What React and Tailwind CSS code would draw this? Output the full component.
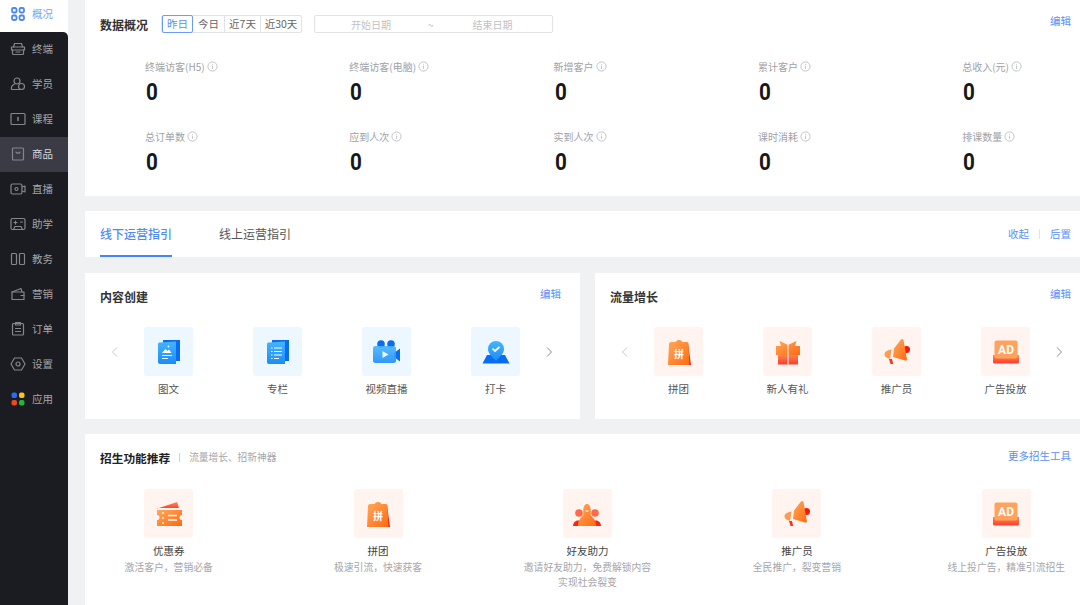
import React from 'react';

const font = "font-['Noto_Sans_CJK_SC','Noto_Sans',sans-serif]";

function NavSvg({ children }) {
  return (
    <svg width="16" height="16" viewBox="0 0 16 16" fill="none" stroke="#85868b" strokeWidth="1.2" strokeLinejoin="round" strokeLinecap="round">
      {children}
    </svg>
  );
}

const navItems = [
  { name: '终端', icon: <><path d="M3.5 6 4.5 2.5h7l1 3.5" /><path d="M1.5 6h13v3h-13z" /><path d="M2.5 9v3.5a1 1 0 0 0 1 1h9a1 1 0 0 0 1-1V9" /><path d="M6 11h4" /></> },
  { name: '学员', icon: <><circle cx="7" cy="5" r="3" /><path d="M4.5 8C2.500 9 1 11 1.500 13.500h9" /><circle cx="11.500" cy="10.500" r="3" /></> },
  { name: '课程', icon: <><rect x="1" y="2.5" width="14" height="11" rx="1" /><path d="M8 6.500v3" strokeWidth="1.500" /></> },
  { name: '商品', icon: <><rect x="2.5" y="2" width="11" height="12" rx="1" /><path d="M6 6c.4 1.600 3.600 1.600 4 0" /></> },
  { name: '直播', icon: <><rect x="1" y="3" width="11" height="10" rx="1.5" /><circle cx="6.500" cy="8" r="1.500" /><path d="M12 6l3-1v6l-3-1" /></> },
  { name: '助学', icon: <><rect x="1" y="2.5" width="14" height="11" rx="1.5" /><path d="M4 6.500h3M5.500 5v3M10.500 6h2M3.500 13.500 5 10.500h6l1.500 3" /></> },
  { name: '教务', icon: <><rect x="1.5" y="2.5" width="5" height="11" rx="1" /><rect x="9.5" y="2.5" width="5" height="11" rx="1" /></> },
  { name: '营销', icon: <><path d="M2 6h12v7.500H2z" /><path d="M2 6l9-3.500 1 3.500" /><path d="M11 9.500h3" /></> },
  { name: '订单', icon: <><rect x="2.5" y="2.5" width="11" height="11.5" rx="1" /><rect x="5.5" y="1.5" width="5" height="2.5" /><path d="M5.500 7.500h5M5.500 10.500h5" /></> },
  { name: '设置', icon: <><path d="M4.500 2h7L15 8l-3.500 6h-7L1 8z" /><circle cx="8" cy="8" r="2" /></> },
];

function NavRow({ name, icon, active }) {
  return (
    <div className={`flex h-[35px] items-center pl-[10px] pb-[2px] gap-[6px] ${active ? 'bg-[#3a3b45]' : ''}`}>
      <span className="flex w-[16px] h-[16px] items-center justify-center">{icon}</span>
      <span className={`text-[10.5px] ${active ? 'text-[#d8d8dc]' : 'text-[#a4a5a9]'}`}>{name}</span>
    </div>
  );
}

function Sidebar() {
  return (
    <aside className="w-[68px] h-full shrink-0 bg-white flex flex-col">
      <div className="flex h-[32px] shrink-0 items-center pl-[10px] pb-[4px] gap-[6px]">
        <svg width="16" height="16" viewBox="0 0 16 16" fill="none" stroke="#4a88f7" strokeWidth="1.8">
          <rect x="2" y="2" width="4.5" height="4.5" rx="1.5" />
          <rect x="9.5" y="2" width="4.5" height="4.5" rx="1.5" />
          <rect x="2" y="9.5" width="4.5" height="4.5" rx="1.5" />
          <rect x="9.5" y="9.5" width="4.5" height="4.5" rx="1.5" />
        </svg>
        <span className="text-[10.5px] text-[#7d9ff5]">概况</span>
      </div>
      <nav className="flex-1 bg-[#1b1c22] rounded-tr-[5px]">
        {navItems.map((item) => (
          <NavRow key={item.name} name={item.name} active={item.name === '商品'} icon={<NavSvg>{item.icon}</NavSvg>} />
        ))}
        <NavRow
          name="应用"
          icon={
            <svg width="14" height="14" viewBox="0 0 14 14">
              <rect x="0.5" y="0.5" width="5.5" height="5.5" rx="2" fill="#2f6bf2" />
              <rect x="8" y="0.5" width="5.5" height="5.5" rx="2" fill="#f7c512" />
              <rect x="0.5" y="8" width="5.5" height="5.5" rx="2" fill="#f0471c" />
              <rect x="8" y="8" width="5.5" height="5.5" rx="2" fill="#22b834" />
            </svg>
          }
        />
      </nav>
    </aside>
  );
}

function Gradients() {
  return (
    <svg width="0" height="0" className="absolute">
      <defs>
        <linearGradient id="blueDoc" x1="0" y1="0" x2="0" y2="1">
          <stop offset="0" stopColor="#45b4ff" />
          <stop offset="1" stopColor="#1c8df5" />
        </linearGradient>
        <linearGradient id="orange" x1="0" y1="0" x2="1" y2="1">
          <stop offset="0" stopColor="#ffa85a" />
          <stop offset="1" stopColor="#ff6a12" />
        </linearGradient>
        <linearGradient id="orangeRed" x1="0" y1="0" x2="0" y2="1">
          <stop offset="0" stopColor="#ff8a55" />
          <stop offset="1" stopColor="#fb3c2a" />
        </linearGradient>
      </defs>
    </svg>
  );
}

function IconSvg({ children }) {
  return <svg width="28" height="28" viewBox="0 0 28 28" fill="none">{children}</svg>;
}

const DocPic = () => (
  <IconSvg>
    <path d="M8 2h17v21H8z" fill="#0a6cf0" />
    <path d="M3 6c0-1 .8-1.500 1.500-1.500L21 3.500v22.500H5c-1.200 0-2-.8-2-2z" fill="url(#blueDoc)" />
    <path d="M7 15l3.500-4 2 2 1.500-1.500 2.500 3.500z" fill="#fff" />
    <circle cx="13.500" cy="8.500" r="0.900" fill="#fff" />
    <path d="M7 17.500h10M7 20.500h6" stroke="#fff" strokeWidth="1.1" />
  </IconSvg>
);

const DocList = () => (
  <IconSvg>
    <path d="M8 2h17v21H8z" fill="#0a6cf0" />
    <path d="M3 6c0-1 .8-1.500 1.500-1.500L21 3.500v22.500H5c-1.200 0-2-.8-2-2z" fill="url(#blueDoc)" />
    <path d="M7 10h1.500M10 10h8M7 13.500h1.500M10 13.500h8M7 17h1.500M10 17h8M7 20.500h1.500M10 20.500h5" stroke="#fff" strokeWidth="1.2" />
  </IconSvg>
);

const Camera = () => (
  <IconSvg>
    <circle cx="8" cy="6" r="3.800" fill="#0a6cf0" />
    <circle cx="18" cy="6" r="3.800" fill="#0a6cf0" />
    <path d="M21 15l6-4.500v13L21 19z" fill="#0a6cf0" />
    <rect x="0" y="8" width="23" height="17" rx="2.5" fill="url(#blueDoc)" opacity="0.9" />
    <path d="M9.500 13l6 3.500-6 3.500z" fill="#fff" opacity="0.9" />
  </IconSvg>
);

const Pin = () => (
  <IconSvg>
    <path d="M5 17h18l4.500 8.500H.5z" fill="#0a6cf0" />
    <path d="M14 23c-2-3-8-6.500-8-12a8 8 0 0 1 16 0c0 5.500-6 9-8 12z" fill="url(#blueDoc)" />
    <path d="M10.500 10.500l2.500 2.500 4.500-4" stroke="#fff" strokeWidth="1.7" />
  </IconSvg>
);

const Bag = () => (
  <IconSvg>
    <path d="M10 5c1-2 2-3 4-3s3 1 4 3z" fill="#ff9a2c" />
    <path d="M23 5l3 22H20z" fill="#f51f0a" />
    <path d="M4 6c0-1 .7-2 2-2h16c1 0 1.500 1 1.500 2l1 21H3z" fill="url(#orange)" />
    <text x="14" y="19.500" textAnchor="middle" fontSize="10" fontWeight="700" fill="#fff" className={font}>拼</text>
  </IconSvg>
);

const Gift = () => (
  <IconSvg>
    <path d="M4 16h20v10.500H4z" fill="url(#orangeRed)" />
    <path d="M2 8h5L5.500 3 14 7l8.500-4L21 8h5v9H2z" fill="url(#orange)" />
    <path d="M13.300 7h1.400v19.500h-1.400z" fill="#ffd9c2" />
  </IconSvg>
);

const Horn = () => (
  <IconSvg>
    <path d="M6 21h3l1.200 5H7.500z" fill="#f8341e" />
    <circle cx="23.500" cy="11.500" r="3.500" fill="#f5180b" />
    <path d="M11 10.500 18 1.500Q19.500.5 20.500 2L24 21.500Q23.500 23 22 22.500L10 19z" fill="url(#orange)" />
    <path d="M8.500 11.500C4 12 1.500 14 1.500 16.500 1.500 19 4 20 7 21z" fill="#ff9a4e" />
  </IconSvg>
);

const Ad = () => (
  <IconSvg>
    <path d="M1 17h26v7a1.500 1.500 0 0 1-1.500 1.500h-23A1.500 1.500 0 0 1 1 24z" fill="url(#orangeRed)" />
    <rect x="2.5" y="2.500" width="23" height="18" rx="2" fill="#ffa35c" />
    <text x="14" y="16" textAnchor="middle" fontSize="12" fontWeight="700" fill="#fff" className="font-['Roboto',sans-serif]">AD</text>
  </IconSvg>
);

const Ticket = () => (
  <IconSvg>
    <path d="M1 9 22 2l2 6H3z" fill="url(#orangeRed)" />
    <path d="M2 10h25v5a2.500 2.500 0 0 0 0 5v6H2v-6a2.500 2.500 0 0 0 0-5z" fill="url(#orange)" />
    <path d="M8 12v2M8 17v2M8 22v2" stroke="#fff" strokeWidth="1.3" />
    <path d="M13 15.500h9M13 20h9" stroke="#fff" strokeWidth="1.3" />
  </IconSvg>
);

const Friends = () => (
  <IconSvg>
    <circle cx="6" cy="13" r="3.800" fill="#ff6a4a" />
    <circle cx="22" cy="13" r="3.800" fill="#ff6a4a" />
    <path d="M0 26c0-3 2-5 4-5.500h20c2 .5 4 2.500 4 5.500z" fill="#f9260f" />
    <path d="M5 26c0-7 4-9 5.500-11C9.500 9 11 4 14 4s4.500 5 3.500 11C19 17 23 19 23 26z" fill="url(#orange)" />
    <path d="M12.500 11h3" stroke="#fff" strokeWidth="1.2" />
  </IconSvg>
);

function IconBox({ tone, children }) {
  return (
    <div className={`w-[49px] h-[49px] rounded-[3px] flex items-center justify-center ${tone === 'blue' ? 'bg-[#ecf7ff]' : 'bg-[#fff4ef]'}`}>
      {children}
    </div>
  );
}

function InfoIcon() {
  return (
    <svg width="11" height="11" viewBox="0 0 11 11" fill="none" stroke="#b4b6bb" strokeWidth="0.8">
      <circle cx="5.500" cy="5.500" r="4.600" />
      <path d="M5.500 4.700v3.200M5.500 2.900v.8" />
    </svg>
  );
}

function Chevron({ dir, light }) {
  return (
    <svg width="8" height="10" viewBox="0 0 8 10" fill="none" stroke={light ? '#c6c7ca' : '#85878c'} strokeWidth="1">
      <path d={dir === 'left' ? 'M6 .5 1.500 5 6 9.500' : 'M2 .5 6.500 5 2 9.500'} />
    </svg>
  );
}

const ranges = [
  { label: '昨日', w: 'w-[31px]', active: true },
  { label: '今日', w: 'w-[32px]' },
  { label: '近7天', w: 'w-[36px]' },
  { label: '近30天', w: 'w-[40px]' },
];

const stats = ['终端访客(H5)', '终端访客(电脑)', '新增客户', '累计客户', '总收入(元)', '总订单数', '应到人次', '实到人次', '课时消耗', '排课数量'];

function Overview() {
  return (
    <section className="bg-white h-[196px] pt-[15px] pl-[15px] pr-[19px]">
      <div className="flex items-center h-[18px]">
        <h2 className="w-[61px] text-[12px] font-bold text-[#333] pt-[2px]">数据概况</h2>
        <div className="flex h-[18px] rounded-[2px] border border-[#e2e3e6]">
          {ranges.map((r) => (
            <span
              key={r.label}
              className={`${r.w} flex items-center justify-center text-[10.5px] -my-px border-r last:border-r-0 ${r.active ? 'border border-[#6d9cf8] rounded-[2px] text-[#5b8ff7]' : 'border-[#e2e3e6] text-[#666]'}`}
            >
              {r.label}
            </span>
          ))}
        </div>
        <div className="ml-[12px] w-[239px] h-[18px] rounded-[2px] border border-[#e2e3e6] flex items-center text-[10px] text-[#c0c1c4]">
          <span className="ml-[36px]">开始日期</span>
          <span className="ml-[37px]">~</span>
          <span className="ml-[39px]">结束日期</span>
        </div>
        <span className="ml-auto -mt-[6px] text-[10.5px] text-[#5b8ff7]">编辑</span>
      </div>
      <div className="grid grid-cols-[repeat(5,204.3px)] grid-rows-[70px_70px] pl-[45px] mt-[26px]">
        {stats.map((s) => (
          <div key={s}>
            <div className="flex items-center gap-[2px] h-[14px] text-[10px] text-[#a0a1a5]">
              {s}
              <InfoIcon />
            </div>
            <div className="mt-[6px] ml-px h-[26px] leading-[26px] text-[24px] font-bold text-[#17181a] origin-left scale-x-[0.86] font-['Roboto',sans-serif]">0</div>
          </div>
        ))}
      </div>
    </section>
  );
}

function Tabs() {
  return (
    <section className="mt-[15px] bg-white h-[46px] pl-[15px] pr-[19px] flex">
      <div className="w-[72px] pt-[2px] text-[12px] font-medium text-[#4f8af8] border-b-[2px] border-[#3f86ff] flex items-center">线下运营指引</div>
      <div className="ml-[47px] text-[12px] text-[#555] flex items-center">线上运营指引</div>
      <div className="ml-auto flex items-center gap-[10px] text-[10.5px] text-[#5b8ff7]">
        <span>收起</span>
        <span className="w-px h-[10px] bg-[#e2e3e6]" />
        <span>后置</span>
      </div>
    </section>
  );
}

function Carousel({ title, tone, items }) {
  return (
    <section className="w-[495px] h-[146px] bg-white pt-[15px] pl-[15px] pr-[19px]">
      <div className="flex items-center justify-between h-[18px]">
        <h2 className="text-[12px] font-bold text-[#333]">{title}</h2>
        <span className="text-[10.5px] text-[#5b8ff7] -mt-[6px]">编辑</span>
      </div>
      <div className="mt-[21px] flex items-start">
        <span className="w-[30px] h-[49px] shrink-0 flex items-center justify-center"><Chevron dir="left" light /></span>
        <div className="grid grid-cols-[repeat(4,109px)] w-[436px] shrink-0">
          {items.map((it) => (
            <div key={it.label} className="w-[49px] ml-[14px] flex flex-col items-center">
              <IconBox tone={tone}>{it.icon}</IconBox>
              <span className="mt-[5px] text-[10.5px] text-[#555] whitespace-nowrap">{it.label}</span>
            </div>
          ))}
        </div>
        <span className="w-[8px] h-[49px] shrink-0 flex items-center justify-center -ml-[21px]"><Chevron dir="right" /></span>
      </div>
    </section>
  );
}

const recruits = [
  { name: '优惠券', icon: <Ticket />, desc: ['激活客户，营销必备'] },
  { name: '拼团', icon: <Bag />, desc: ['极速引流，快速获客'] },
  { name: '好友助力', icon: <Friends />, desc: ['邀请好友助力，免费解锁内容', '实现社会裂变'] },
  { name: '推广员', icon: <Horn />, desc: ['全民推广，裂变营销'] },
  { name: '广告投放', icon: <Ad />, desc: ['线上投广告，精准引流招生'] },
];

function Recruit() {
  return (
    <section className="mt-[15px] bg-white h-[171px] pt-[14px]">
      <div className="flex items-center h-[18px] pl-[15px] pr-[19px]">
        <h2 className="text-[11.7px] font-bold text-[#222] pt-[2px]">招生功能推荐</h2>
        <span className="mx-[9px] w-px h-[9px] bg-[#cfd0d3]" />
        <span className="text-[9.7px] text-[#a5a6aa]">流量增长、招新神器</span>
        <span className="ml-auto text-[10.5px] text-[#5b8ff7] -mt-[2px]">更多招生工具</span>
      </div>
      <div className="mt-[23px] grid grid-cols-5 gap-x-[42px]">
        {recruits.map((r) => (
          <div key={r.name} className="flex flex-col items-center">
            <IconBox tone="orange">{r.icon}</IconBox>
            <span className="mt-[5px] text-[10.5px] leading-[16px] text-[#444]">{r.name}</span>
            {r.desc.map((d) => (
              <span key={d} className="mt-[2px] text-[9.8px] leading-[13px] text-[#a5a6aa] whitespace-nowrap">{d}</span>
            ))}
          </div>
        ))}
      </div>
    </section>
  );
}

export default function App() {
  return (
    <div className={`w-[1080px] h-[605px] overflow-hidden flex bg-[#f0f1f3] relative ${font}`}>
      <Gradients />
      <Sidebar />
      <main className="w-[1005px] shrink-0 ml-[17px]">
        <Overview />
        <Tabs />
        <div className="mt-[16px] flex gap-[15px]">
          <Carousel
            title="内容创建"
            tone="blue"
            items={[
              { label: '图文', icon: <DocPic /> },
              { label: '专栏', icon: <DocList /> },
              { label: '视频直播', icon: <Camera /> },
              { label: '打卡', icon: <Pin /> },
            ]}
          />
          <Carousel
            title="流量增长"
            tone="orange"
            items={[
              { label: '拼团', icon: <Bag /> },
              { label: '新人有礼', icon: <Gift /> },
              { label: '推广员', icon: <Horn /> },
              { label: '广告投放', icon: <Ad /> },
            ]}
          />
        </div>
        <Recruit />
      </main>
    </div>
  );
}
